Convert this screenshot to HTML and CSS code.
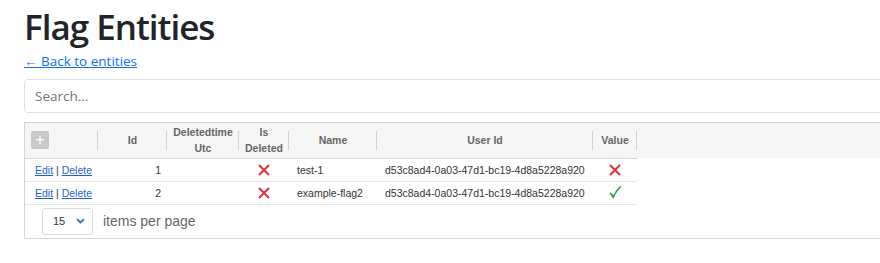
FILE: index.html
```html
<!DOCTYPE html>
<html>
<head>
<meta charset="utf-8">
<link rel="stylesheet" href="styles.css">
</head>
<body>
<div class="page">
  <h1 class="title">Flag Entities</h1>
  <a class="back" href="#">← Back to entities</a>
  <input class="search" type="text" placeholder="Search...">
  <div class="grid">
    <table class="tbl">
      <colgroup>
        <col class="c-cmd"><col class="c-id"><col class="c-del"><col class="c-isdel"><col class="c-name"><col class="c-user"><col class="c-val">
      </colgroup>
      <thead>
        <tr>
          <th><span class="add">+</span></th>
          <th>Id</th>
          <th>Deletedtime<br>Utc</th>
          <th>Is<br>Deleted</th>
          <th>Name</th>
          <th>User Id</th>
          <th>Value</th>
        </tr>
      </thead>
      <tbody>
        <tr>
          <td class="cmd"><a href="#">Edit</a> | <a href="#">Delete</a></td>
          <td class="num">1</td>
          <td></td>
          <td class="ctr"><svg class="ico" width="12" height="12" viewBox="0 0 12 12"><path d="M1 1 L11 11 M11 1 L1 11" stroke="#d9363e" stroke-width="2.1" fill="none"/></svg></td>
          <td>test-1</td>
          <td>d53c8ad4-0a03-47d1-bc19-4d8a5228a920</td>
          <td class="ctr"><svg class="ico" width="12" height="12" viewBox="0 0 12 12"><path d="M1 1 L11 11 M11 1 L1 11" stroke="#d9363e" stroke-width="2.1" fill="none"/></svg></td>
        </tr>
        <tr>
          <td class="cmd"><a href="#">Edit</a> | <a href="#">Delete</a></td>
          <td class="num">2</td>
          <td></td>
          <td class="ctr"><svg class="ico" width="12" height="12" viewBox="0 0 12 12"><path d="M1 1 L11 11 M11 1 L1 11" stroke="#d9363e" stroke-width="2.1" fill="none"/></svg></td>
          <td>example-flag2</td>
          <td>d53c8ad4-0a03-47d1-bc19-4d8a5228a920</td>
          <td class="ctr"><svg class="ico" width="12" height="13" viewBox="0 0 12 13"><path d="M1.2 7.2 L4.3 11.6 Q7 4.5 11.3 0.8 Q7.5 4.8 4.6 10 Z" stroke="#2e9d47" stroke-width="1.4" stroke-linejoin="round" fill="#2e9d47"/></svg></td>
        </tr>
      </tbody>
    </table>
    <div class="pager">
      <div class="select"><span>15</span><svg class="chev" width="9" height="6" viewBox="0 0 9 6"><path d="M1 1.2 L4.5 4.5 L8 1.2" fill="none" stroke="#2f6fd6" stroke-width="1.8"/></svg></div>
      <span class="ipp">items per page</span>
    </div>
  </div>
</div>
</body>
</html>
```

FILE: styles.css
```css
html, body { margin: 0; padding: 0; overflow: hidden; background: #fff; }
body { font-family: "Open Sans", "Noto Sans", sans-serif; color: #212529; }
.page { padding: 0 0 0 24px; width: 1100px; }
.title { margin: 0; padding-top: 3px; font-size: 35px; font-weight: 600; line-height: 48px; color: #212529; letter-spacing: -1px; }
.back { display: block; margin-top: 0; font-size: 13.5px; line-height: 20px; color: #0d6efd; text-decoration: underline; }
.search { display: block; box-sizing: border-box; width: 1000px; height: 34px; margin-top: 8px; padding: 0 10px; border: 1px solid #dee2e6; border-radius: 4px; font-family: "Open Sans", sans-serif; font-size: 13.5px; outline: none; }
.search::placeholder { color: #6c757d; }
.grid { box-sizing: border-box; width: 1000px; margin-top: 9px; border: 1px solid #d5d5d5; border-top-color: #cfcfcf; background: linear-gradient(#f6f6f6, #f6f6f6) top / 100% 35px no-repeat #fff; }
.tbl { width: 612px; border-collapse: collapse; table-layout: fixed; font-family: "Liberation Sans", Arial, sans-serif; font-size: 10.5px; color: #333; }
.c-cmd { width: 73px; } .c-id { width: 69px; } .c-del { width: 72px; } .c-isdel { width: 50px; } .c-name { width: 88px; } .c-user { width: 216px; } .c-val { width: 44px; }
thead tr { height: 35px; }
th { position: relative; font-weight: bold; color: #666; text-align: center; line-height: 16px; padding: 0; border-bottom: 1px solid #d5d5d5; }
th::after { content: ""; position: absolute; right: 0; top: 8px; bottom: 8px; border-right: 1px solid #d2d2d2; }
th:first-child { text-align: left; padding-left: 6px; }
.add { display: inline-block; width: 18px; height: 18px; background: #c8c8c8; color: #fff; border-radius: 2px; text-align: center; line-height: 18px; font-size: 17px; font-weight: normal; vertical-align: middle; }
tbody tr { height: 23px; }
td { padding: 0 8px; border-bottom: 1px solid #e6e6e6; white-space: nowrap; overflow: visible; }
td.cmd { padding-left: 10px; }
td.num { text-align: right; padding-right: 6px; }
td.ctr { text-align: center; padding: 0; line-height: 0; }
.ico { display: inline-block; vertical-align: middle; }
.cmd a { color: #1f5fd0; text-decoration: underline; }
.pager { display: flex; align-items: center; height: 33px; padding-left: 17px; gap: 10px; }
.select { box-sizing: border-box; width: 51px; height: 27px; border: 1px solid #dcdcdc; border-radius: 3px; display: flex; align-items: center; justify-content: space-between; padding: 0 7px 0 10px; font-family: "Liberation Sans", Arial, sans-serif; font-size: 11px; color: #333; }
.ipp { font-family: "Liberation Sans", Arial, sans-serif; font-size: 14px; color: #666; }
```
